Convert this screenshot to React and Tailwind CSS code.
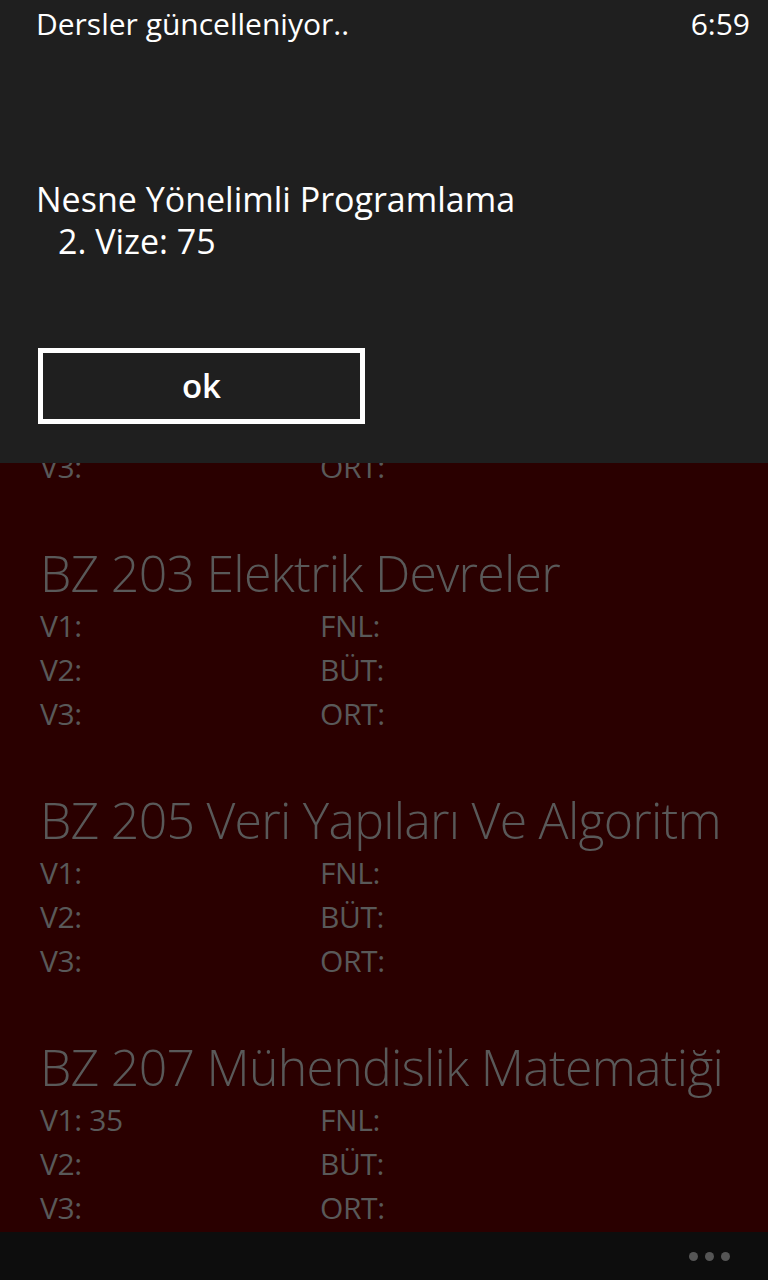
import React from 'react';

const COURSES = [
  { title: 'BZ 201 Nesne Yönelimli Programlama', v1: '', v2: '', v3: '' },
  { title: 'BZ 209 Olasılık ve İstatistik', v1: '', v2: '', v3: '' },
  { title: 'BZ 203 Elektrik Devreler', v1: '', v2: '', v3: '' },
  { title: 'BZ 205 Veri Yapıları Ve Algoritm', v1: '', v2: '', v3: '' },
  { title: 'BZ 207 Mühendislik Matematiği', v1: '35', v2: '', v3: '' },
];

function CourseBlock({ course }) {
  return (
    <div className="mb-[53px] whitespace-nowrap">
      <div className="text-[50px] leading-[62px] font-light tracking-[-0.75px]">{course.title}</div>
      <div className="grid grid-cols-[280px_1fr] text-[30px] leading-[44px] tracking-[-0.4px]">
        <div>V1:{course.v1 && ` ${course.v1}`}</div>
        <div>FNL:</div>
        <div>V2:{course.v2 && ` ${course.v2}`}</div>
        <div>BÜT:</div>
        <div>V3:{course.v3 && ` ${course.v3}`}</div>
        <div>ORT:</div>
      </div>
    </div>
  );
}

export default function App() {
  return (
    <div
      className="relative w-[768px] h-[1280px] overflow-hidden flex flex-col bg-[#2a0000]"
      style={{ fontFamily: '"Open Sans", "Noto Sans", sans-serif' }}
    >
      {/* Course list (behind the message box) */}
      <div className="flex-1 overflow-hidden pt-[48px] pl-[40px] text-[#595959]">
        {COURSES.map((c) => (
          <CourseBlock key={c.title} course={c} />
        ))}
      </div>

      {/* App bar */}
      <div className="h-12 bg-[#0d0d0d] flex items-center justify-end pr-[38px] gap-[7px]">
        <span className="w-[9px] h-[9px] rounded-full bg-[#555555]" />
        <span className="w-[9px] h-[9px] rounded-full bg-[#555555]" />
        <span className="w-[9px] h-[9px] rounded-full bg-[#555555]" />
      </div>

      {/* Message box */}
      <div className="absolute top-0 left-0 right-0 h-[463px] bg-[#1f1f1f] text-white">
        <div className="flex justify-between pl-[36px] pr-[18px] pt-[4px] text-[30px] leading-[40px]">
          <span>Dersler güncelleniyor..</span>
          <span>6:59</span>
        </div>
        <div className="mt-[134px] pl-[36px] text-[34px] leading-[42px]">
          <div>Nesne Yönelimli Programlama</div>
          <div className="pl-[22px]">2. Vize: 75</div>
        </div>
        <button className="mt-[86px] ml-[38px] w-[327px] h-[76px] border-[5px] border-white flex items-center justify-center text-[33px] font-semibold">
          ok
        </button>
      </div>
    </div>
  );
}
